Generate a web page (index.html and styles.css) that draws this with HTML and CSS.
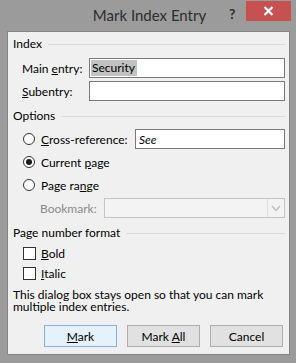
FILE: index.html
```html
<!DOCTYPE html>
<html>
<head>
<meta charset="utf-8">
<link rel="stylesheet" href="styles.css">
</head>
<body>
<div class="window">
  <div class="titlebar">
    <div class="title">Mark Index Entry</div>
    <div class="help">?</div>
    <div class="close">
      <svg width="11" height="10" viewBox="0 0 11 10"><path d="M1.5 1 L9.5 9 M9.5 1 L1.5 9" stroke="#fff" stroke-width="2.2" fill="none"/></svg>
    </div>
  </div>
  <div class="panel">
    <div class="group-head"><span>Index</span><i class="rule"></i></div>
    <div class="row field first">
      <label class="lbl">Main <u>e</u>ntry:</label>
      <div class="input"><span class="sel">Security</span></div>
    </div>
    <div class="row field second">
      <label class="lbl"><u>S</u>ubentry:</label>
      <div class="input"></div>
    </div>

    <div class="group-head options"><span>Options</span><i class="rule"></i></div>
    <div class="row opt cross">
      <span class="radio"></span>
      <span class="optlbl"><u>C</u>ross-reference:</span>
      <div class="input see">See</div>
    </div>
    <div class="row opt">
      <span class="radio on"></span>
      <span class="optlbl">Current <u>p</u>age</span>
    </div>
    <div class="row opt">
      <span class="radio"></span>
      <span class="optlbl">Page ra<u>n</u>ge</span>
    </div>
    <div class="row bookmark">
      <span class="bmlbl">Bookmark:</span>
      <div class="select">
        <div class="sel-arrow">
          <svg width="10" height="7" viewBox="0 0 10 7"><path d="M1 1 L5 5.5 L9 1" stroke="#c2c2c2" stroke-width="1.6" fill="none"/></svg>
        </div>
      </div>
    </div>

    <div class="group-head pnf"><span>Page number format</span><i class="rule"></i></div>
    <div class="row chk">
      <span class="box"></span>
      <span class="optlbl"><u>B</u>old</span>
    </div>
    <div class="row chk">
      <span class="box"></span>
      <span class="optlbl"><u>I</u>talic</span>
    </div>

    <p class="note">This dialog box stays open so that you can mark multiple index entries.</p>

    <div class="buttons">
      <div class="btn default"><span><u>M</u>ark</span></div>
      <div class="btn"><span>Mark <u>A</u>ll</span></div>
      <div class="btn"><span>Cancel</span></div>
    </div>
  </div>
</div>
</body>
</html>
```

FILE: styles.css
```css
* { box-sizing: border-box; }
html, body { margin: 0; padding: 0; }
body {
  font-family: "Lato", "Noto Sans", sans-serif;
  font-size: 12px;
  color: #000;
  background: #9a9a9a;
}
.window {
  width: 296px;
  height: 363px;
  background: #9b9b9b;
  padding: 0 6px 8px 7px;
  display: flex;
  flex-direction: column;
}
.titlebar {
  height: 31px;
  position: relative;
  display: flex;
  justify-content: center;
}
.title {
  font-size: 15px;
  color: #2d2d2d;
  line-height: 30px;
  padding-left: 2px;
}
.help {
  position: absolute;
  left: 222px;
  top: 5px;
  font-weight: bold;
  font-size: 14px;
  color: #2d2d2d;
}
.close {
  position: absolute;
  left: 239px;
  top: 1px;
  width: 45px;
  height: 20px;
  background: #c75050;
  display: flex;
  align-items: center;
  justify-content: center;
}
.panel {
  flex: 1;
  background: #f0f0f0;
  border: 1px solid #848484;
  padding: 4px 4px 0 5px;
  display: flex;
  flex-direction: column;
}
.group-head {
  height: 16px;
  display: flex;
  align-items: center;
  gap: 6px;
  line-height: 16px;
}
.group-head .rule {
  flex: 1;
  height: 1px;
  background: #dcdcdc;
}
.group-head.options { margin-top: 7px; }
.group-head.pnf { margin-top: 7px; }
.row {
  display: flex;
  align-items: center;
  height: 20px;
  padding-left: 9px;
}
.row.first { margin-top: 6px; }
.row.second { margin-top: 3px; }
.lbl { width: 67px; }
.input {
  flex: 1;
  height: 20px;
  border: 1px solid #7a7a7a;
  background: #fff;
  padding: 1px 1px;
  display: flex;
  align-items: center;
}
.sel {
  background: #c2c2c2;
  height: 16px;
  line-height: 16px;
  padding: 0 2px 0 1px;
}
.opt.cross { margin-top: 5px; }
.opt { margin-top: 3px; }
.radio {
  width: 12px;
  height: 12px;
  border: 1px solid #333;
  border-radius: 50%;
  background: #fff;
  margin-right: 6px;
  margin-left: 1px;
  display: flex;
  align-items: center;
  justify-content: center;
}
.radio.on::after {
  content: "";
  width: 6px;
  height: 6px;
  border-radius: 50%;
  background: #1a1a1a;
}
.cross .optlbl { width: 94px; }
.see {
  font-style: italic;
  padding-left: 3px;
}
.bookmark {
  margin-top: 3px;
  padding-left: 27px;
}
.bmlbl { width: 64px; color: #8a8a8a; }
.select {
  flex: 1;
  height: 20px;
  border: 1px solid #c4c4c4;
  background: #f3f3f3;
  display: flex;
  justify-content: flex-end;
}
.sel-arrow {
  width: 17px;
  border-left: 1px solid #dedede;
  display: flex;
  align-items: center;
  justify-content: center;
}
.group-head.pnf + .chk { margin-top: 2px; }
.box {
  width: 13px;
  height: 13px;
  border: 1px solid #333;
  background: #fff;
  margin-right: 5px;
  margin-left: 1px;
}
.note {
  margin: 6px 0 0 0;
  line-height: 12px;
  padding-right: 10px;
}
.buttons {
  margin-top: auto;
  margin-bottom: 7px;
  display: flex;
  justify-content: flex-end;
  gap: 10px;
  padding-right: 2px;
}
.btn {
  width: 73px;
  height: 22px;
  border: 1px solid #adadad;
  background: #e1e1e1;
  display: flex;
  align-items: center;
  justify-content: center;
}
.btn.default {
  border-color: #7eb4ea;
  background: #e5f1fb;
}
```
